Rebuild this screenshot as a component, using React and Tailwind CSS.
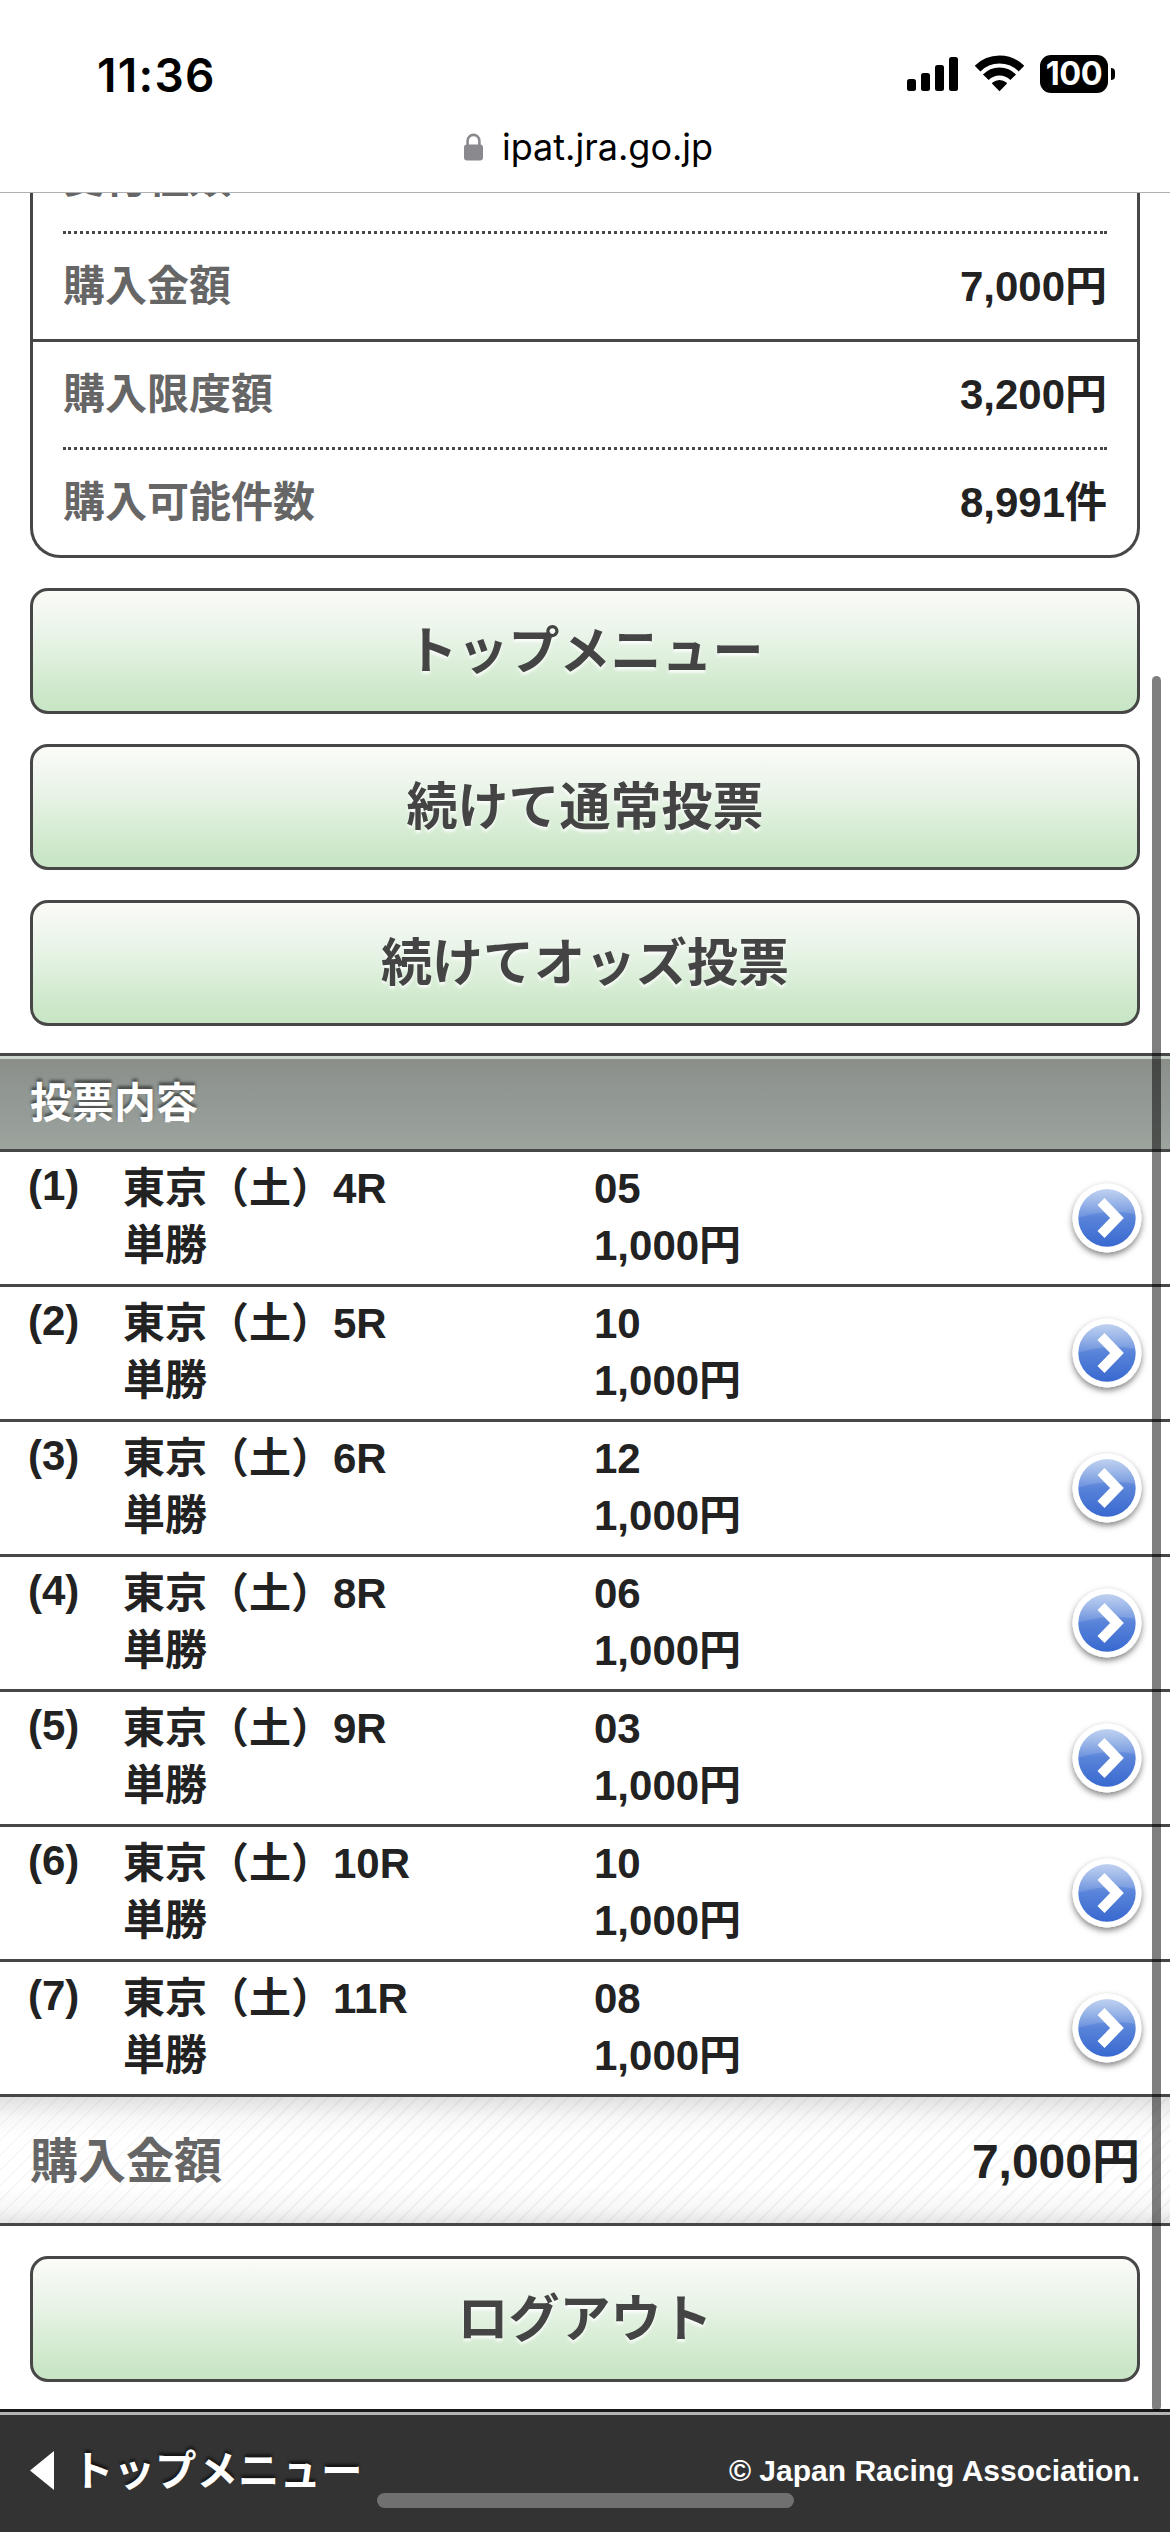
const bets = [
  { no: 1, race: '4R', horse: '05' },
  { no: 2, race: '5R', horse: '10' },
  { no: 3, race: '6R', horse: '12' },
  { no: 4, race: '8R', horse: '06' },
  { no: 5, race: '9R', horse: '03' },
  { no: 6, race: '10R', horse: '10' },
  { no: 7, race: '11R', horse: '08' },
];

const StatusBar = () => (
  <div className="flex h-[148px] items-start justify-between pl-[97px] pr-[55px] font-['Inter'] text-black">
    <span className="mt-[48px] text-[46px] leading-[54px] font-semibold tracking-[1.3px]">11:36</span>
    <div className="mt-[55px] flex items-start">
      {/* Signal */}
      <svg className="h-[38px] w-[51px]" viewBox="0 0 51 38">
        <rect x="0" y="24" width="9" height="12" rx="2.5" />
        <rect x="14" y="18" width="9" height="18" rx="2.5" />
        <rect x="28" y="10" width="9" height="26" rx="2.5" />
        <rect x="42" y="2" width="9" height="34" rx="2.5" />
      </svg>
      {/* Wifi */}
      <svg className="ml-[17px] h-[38px] w-[49px]" viewBox="0 0 49 38">
        <g fill="none" stroke="#000" strokeWidth="7.9">
          <path d="M2.6 13.6A31 31 0 0 1 46.4 13.6" />
          <path d="M10.8 22.3A19 19 0 0 1 38.2 22.3" />
        </g>
        <path d="M24.5 36.2 17.4 29.1a1 1 0 0 1 .1-1.5 11 11 0 0 1 14 0 1 1 0 0 1 .1 1.5z" />
      </svg>
      {/* Battery */}
      <div className="ml-[16px] flex h-[38px] w-[68px] items-center justify-center rounded-[11px] bg-black text-[32.5px] leading-none font-bold tracking-[-0.5px] text-white">
        100
      </div>
      <div className="mt-[13px] ml-[3px] h-[12px] w-[4px] rounded-r-[4px] bg-black" />
    </div>
  </div>
);

const AddressBar = () => (
  <div className="flex h-[44px] items-start pl-[464px] font-['Inter']">
    <svg className="mt-[-15px] h-[28px] w-[19px]" viewBox="0 0 19 28">
      <path d="M3.6 13V7.8a5.9 5.9 0 0 1 11.8 0V13" fill="none" stroke="#8a8a8e" strokeWidth="2.6" />
      <rect x="0" y="11.5" width="19" height="16" rx="3" fill="#8a8a8e" />
    </svg>
    <span className="mt-[-25px] ml-[19px] text-[36px] leading-[48px] text-black">ipat.jra.go.jp</span>
  </div>
);

const DottedLine = () => (
  <div className="h-[3px] shrink-0 border-x-3 border-[#474747] bg-[repeating-linear-gradient(90deg,transparent_0_2px,#474747_2px_5px,transparent_5px_6px)]" />
);

const SummaryRow = ({ label, value }) => (
  <div className="flex h-[105px] shrink-0 items-center justify-between pb-px">
    <span className="text-[#666]">{label}</span>
    <span>{value}</span>
  </div>
);

const GreenButton = ({ children }) => (
  <button className="flex h-[126px] w-full items-center justify-center rounded-[18px] border-3 border-[#474747] bg-[linear-gradient(#fbfbf8,#ebf5ea_33%,#dff0dd_55%,#cbe7c8_88%,#c8e6c6)] text-[51px] leading-none font-bold text-[#444] [text-shadow:0_3px_3px_rgba(255,255,255,0.8)]">
    {children}
  </button>
);

const ArrowIcon = () => (
  <svg className="h-[90px] w-[90px]" viewBox="0 0 90 90">
    <defs>
      <linearGradient id="arrowBlue" x1="0" y1="0" x2="0" y2="1">
        <stop offset="0" stopColor="#a3bdea" />
        <stop offset="0.5" stopColor="#5883d9" />
        <stop offset="1" stopColor="#3869d0" />
      </linearGradient>
      <linearGradient id="arrowGloss" x1="0" y1="0" x2="0" y2="1">
        <stop offset="0" stopColor="#fff" stopOpacity="0.3" />
        <stop offset="1" stopColor="#fff" stopOpacity="0.1" />
      </linearGradient>
      <filter id="arrowShadow" x="-30%" y="-30%" width="160%" height="160%">
        <feDropShadow dx="0" dy="3" stdDeviation="3" floodColor="#000" floodOpacity="0.5" />
      </filter>
    </defs>
    <circle cx="45" cy="45" r="34.5" fill="#fff" filter="url(#arrowShadow)" />
    <circle cx="45" cy="45" r="28.7" fill="url(#arrowBlue)" />
    <path d="M16.3 45a28.7 28.7 0 0 1 57.1-4Q46 35 16.3 45z" fill="url(#arrowGloss)" />
    <path d="M39 28.5 55 45 39 61.5" fill="none" stroke="#fff" strokeWidth="9.8" />
  </svg>
);

const BetRow = ({ bet }) => (
  <div className="flex h-[135px] border-b-3 border-[#474747] pl-[28px] leading-[57px]">
    <div className="w-[95px] pt-[5px]">({bet.no})</div>
    <div className="w-[471px] pt-[8px]">
      <div>東京（土）{bet.race}</div>
      <div>単勝</div>
    </div>
    <div className="w-[468px] pt-[8px]">
      <div>{bet.horse}</div>
      <div>1,000円</div>
    </div>
    <div className="flex items-center">
      <ArrowIcon />
    </div>
  </div>
);

export default function App() {
  return (
    <div className="relative flex h-[2532px] w-[1170px] flex-col overflow-hidden bg-white font-['Liberation_Sans','Noto_Sans_CJK_JP',sans-serif] text-[42px] font-bold text-[#222]">
      <div className="h-[193px] shrink-0 border-b border-[#b0b0b0] font-normal">
        <StatusBar />
        <AddressBar />
      </div>

      {/* Purchase summary, scrolled under the address bar */}
      <div className="mx-[30px] flex h-[365px] shrink-0 flex-col justify-end overflow-hidden rounded-b-[30px] border-x-3 border-b-3 border-[#474747]">
        <div className="px-[30px]">
          <SummaryRow label="受付種類" value="" />
          <DottedLine />
          <SummaryRow label="購入金額" value="7,000円" />
        </div>
        <div className="h-[3px] shrink-0 bg-[#474747]" />
        <div className="px-[30px]">
          <SummaryRow label="購入限度額" value="3,200円" />
          <DottedLine />
          <SummaryRow label="購入可能件数" value="8,991件" />
        </div>
      </div>

      <div className="flex flex-col gap-[30px] px-[30px] pt-[30px] pb-[27px]">
        <GreenButton>トップメニュー</GreenButton>
        <GreenButton>続けて通常投票</GreenButton>
        <GreenButton>続けてオッズ投票</GreenButton>
      </div>

      <div className="border-y-3 border-[#474747]">
        <h2 className="flex h-[93px] items-center border-t-3 border-[#ccd5cd] bg-[linear-gradient(#8b8e89,#929995_45%,#9da49e)] px-[30px] leading-none text-white [text-shadow:0_-3px_3px_rgba(0,0,0,0.5)]">
          投票内容
        </h2>
      </div>

      <div>
        {bets.map((bet) => (
          <BetRow key={bet.no} bet={bet} />
        ))}
      </div>

      {/* Total */}
      <div className="flex h-[129px] shrink-0 items-center justify-between border-b-3 border-[#474747] bg-[linear-gradient(rgba(0,0,0,0.12),rgba(0,0,0,0.03)_16%,transparent_32%,transparent_70%,rgba(0,0,0,0.03)_88%,rgba(0,0,0,0.1)),repeating-linear-gradient(135deg,transparent_0_8.6px,rgba(0,0,0,0.035)_8.6px_10.6px)] px-[30px] pt-[3px] text-[48px] leading-none">
        <span className="text-[#666]">購入金額</span>
        <span>7,000円</span>
      </div>

      <div className="px-[30px] pt-[30px] pb-[27px]">
        <GreenButton>ログアウト</GreenButton>
      </div>

      <footer className="flex h-[123px] shrink-0 border-t-3 border-[#1a1a1a] text-white">
        <div className="flex flex-1 items-start justify-between border-t-3 border-[#b3b3b3] bg-[#333] px-[30px]">
          <div className="flex items-center pt-[27px]">
            <svg className="mb-[3px] h-[39px] w-[24px]" viewBox="0 0 24 39">
              <path d="M24 0v39L0 19.5z" fill="#fff" />
            </svg>
            <span className="ml-[18px] text-[41.5px] leading-[60px] [text-shadow:0_-3px_3px_rgba(0,0,0,0.6)]">トップメニュー</span>
          </div>
          <small className="pt-[36px] text-[30px] leading-[40px]">© Japan Racing Association.</small>
        </div>
      </footer>

      {/* Scrollbar and home indicator */}
      <div className="absolute top-[676px] right-[9px] h-[1735px] w-[9px] rounded-full bg-black/50" />
      <div className="absolute bottom-[24px] left-[377px] h-[15px] w-[417px] rounded-full bg-[#707070]" />
    </div>
  );
}
